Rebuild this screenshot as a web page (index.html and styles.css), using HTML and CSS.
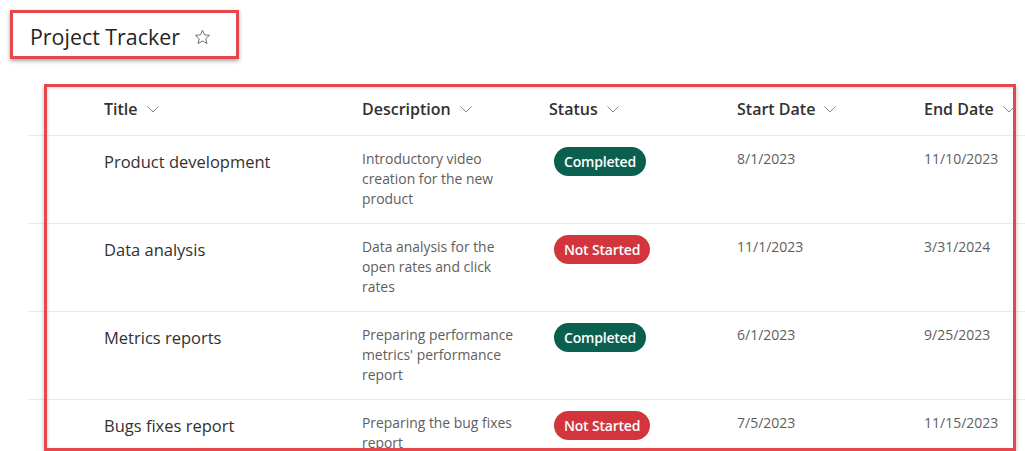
FILE: index.html
```html
<!DOCTYPE html>
<html lang="en">
<head>
<meta charset="utf-8">
<title>Project Tracker</title>
<link rel="stylesheet" href="styles.css">
</head>
<body>
  <header class="page-head">
    <h1 class="page-title">Project Tracker</h1>
    <svg class="star" width="17" height="17" viewBox="0 0 16 16" aria-hidden="true">
      <path d="M8 1.2l1.95 4.3 4.7.45-3.55 3.15 1.05 4.6L8 11.3l-4.15 2.4 1.05-4.6L1.35 5.95l4.7-.45z" fill="none" stroke="#6b6967" stroke-width="0.9" stroke-linejoin="round"/>
    </svg>
  </header>

  <section class="list">
    <div class="row head">
      <div class="cell"></div>
      <div class="cell hcell">Title <svg class="chev" width="12" height="7" viewBox="0 0 12 7"><path d="M.5.5L6 6 11.5.5" fill="none" stroke="#8a8886" stroke-width="1"/></svg></div>
      <div class="cell hcell">Description <svg class="chev" width="12" height="7" viewBox="0 0 12 7"><path d="M.5.5L6 6 11.5.5" fill="none" stroke="#8a8886" stroke-width="1"/></svg></div>
      <div class="cell hcell">Status <svg class="chev" width="12" height="7" viewBox="0 0 12 7"><path d="M.5.5L6 6 11.5.5" fill="none" stroke="#8a8886" stroke-width="1"/></svg></div>
      <div class="cell hcell">Start Date <svg class="chev" width="12" height="7" viewBox="0 0 12 7"><path d="M.5.5L6 6 11.5.5" fill="none" stroke="#8a8886" stroke-width="1"/></svg></div>
      <div class="cell hcell">End Date <svg class="chev" width="12" height="7" viewBox="0 0 12 7"><path d="M.5.5L6 6 11.5.5" fill="none" stroke="#8a8886" stroke-width="1"/></svg></div>
    </div>

    <div class="row">
      <div class="cell"></div>
      <div class="cell title">Product development</div>
      <div class="cell desc">Introductory video creation for the new product</div>
      <div class="cell"><span class="pill done">Completed</span></div>
      <div class="cell date">8/1/2023</div>
      <div class="cell date">11/10/2023</div>
    </div>

    <div class="row">
      <div class="cell"></div>
      <div class="cell title">Data analysis</div>
      <div class="cell desc">Data analysis for the open rates and click rates</div>
      <div class="cell"><span class="pill todo">Not Started</span></div>
      <div class="cell date">11/1/2023</div>
      <div class="cell date">3/31/2024</div>
    </div>

    <div class="row">
      <div class="cell"></div>
      <div class="cell title">Metrics reports</div>
      <div class="cell desc">Preparing performance metrics' performance report</div>
      <div class="cell"><span class="pill done">Completed</span></div>
      <div class="cell date">6/1/2023</div>
      <div class="cell date">9/25/2023</div>
    </div>

    <div class="row">
      <div class="cell"></div>
      <div class="cell title">Bugs fixes report</div>
      <div class="cell desc">Preparing the bug fixes report</div>
      <div class="cell"><span class="pill todo">Not Started</span></div>
      <div class="cell date">7/5/2023</div>
      <div class="cell date">11/15/2023</div>
    </div>

    <div class="frame"></div>
  </section>
</body>
</html>
```

FILE: styles.css
```css
* { box-sizing: border-box; }

html, body {
  margin: 0;
  padding: 0;
  background: #ffffff;
  overflow: hidden;
}

body {
  font-family: "Open Sans", "Noto Sans", sans-serif;
  color: #323130;
  width: 1025px;
  height: 451px;
}

.page-head {
  margin: 10px 0 0 10px;
  width: 229px;
  height: 49px;
  border: 3px solid #e4484d;
  box-shadow: 0 2px 4px rgba(0, 0, 0, 0.35);
  display: flex;
  align-items: center;
  padding: 7px 0 0 17px;
  gap: 14px;
}

.page-title {
  margin: 0;
  font-size: 21.4px;
  font-weight: 400;
  color: #252423;
  letter-spacing: 0;
  line-height: 1;
  padding-bottom: 2px;
}

.star { display: block; margin-bottom: 2px; }

.list {
  position: relative;
  margin-top: 25px;
  padding-left: 28px;
  height: 367px;
  overflow: hidden;
}

.row {
  display: grid;
  grid-template-columns: 76px 258px 187px 188px 187px 1fr;
  height: 88px;
  border-bottom: 1px solid #edebe9;
  white-space: nowrap;
}

.row.head {
  height: 52px;
  align-items: center;
}

.hcell {
  display: flex;
  align-items: center;
  gap: 9px;
  font-size: 16px;
  font-weight: 600;
  color: #323130;
  padding-bottom: 2px;
}

.chev { display: block; flex: none; margin-top: 1px; }

.cell.title {
  padding-top: 11px;
  font-size: 16.5px;
  line-height: 29px;
  color: #323130;
}

.cell.desc {
  padding-top: 13px;
  font-size: 13.9px;
  line-height: 20px;
  color: #605e5c;
  white-space: normal;
  width: 157px;
}

.cell.date {
  padding-top: 13px;
  font-size: 14px;
  line-height: 20px;
  color: #605e5c;
}

.pill {
  display: inline-block;
  margin: 11px 0 0 5px;
  height: 29px;
  line-height: 29px;
  padding: 0 10px;
  border-radius: 15px;
  font-size: 14px;
  font-weight: 600;
  color: #ffffff;
  letter-spacing: -0.2px;
}

.pill.done { background: #0b5f4f; }
.pill.todo { background: #d2353c; }

.frame {
  position: absolute;
  top: 0;
  left: 44px;
  width: 972px;
  bottom: 0;
  border: 3px solid #e4484d;
  box-shadow: 0 2px 4px rgba(0, 0, 0, 0.3), inset 1px 1px 3px rgba(0, 0, 0, 0.15);
  pointer-events: none;
}
```
